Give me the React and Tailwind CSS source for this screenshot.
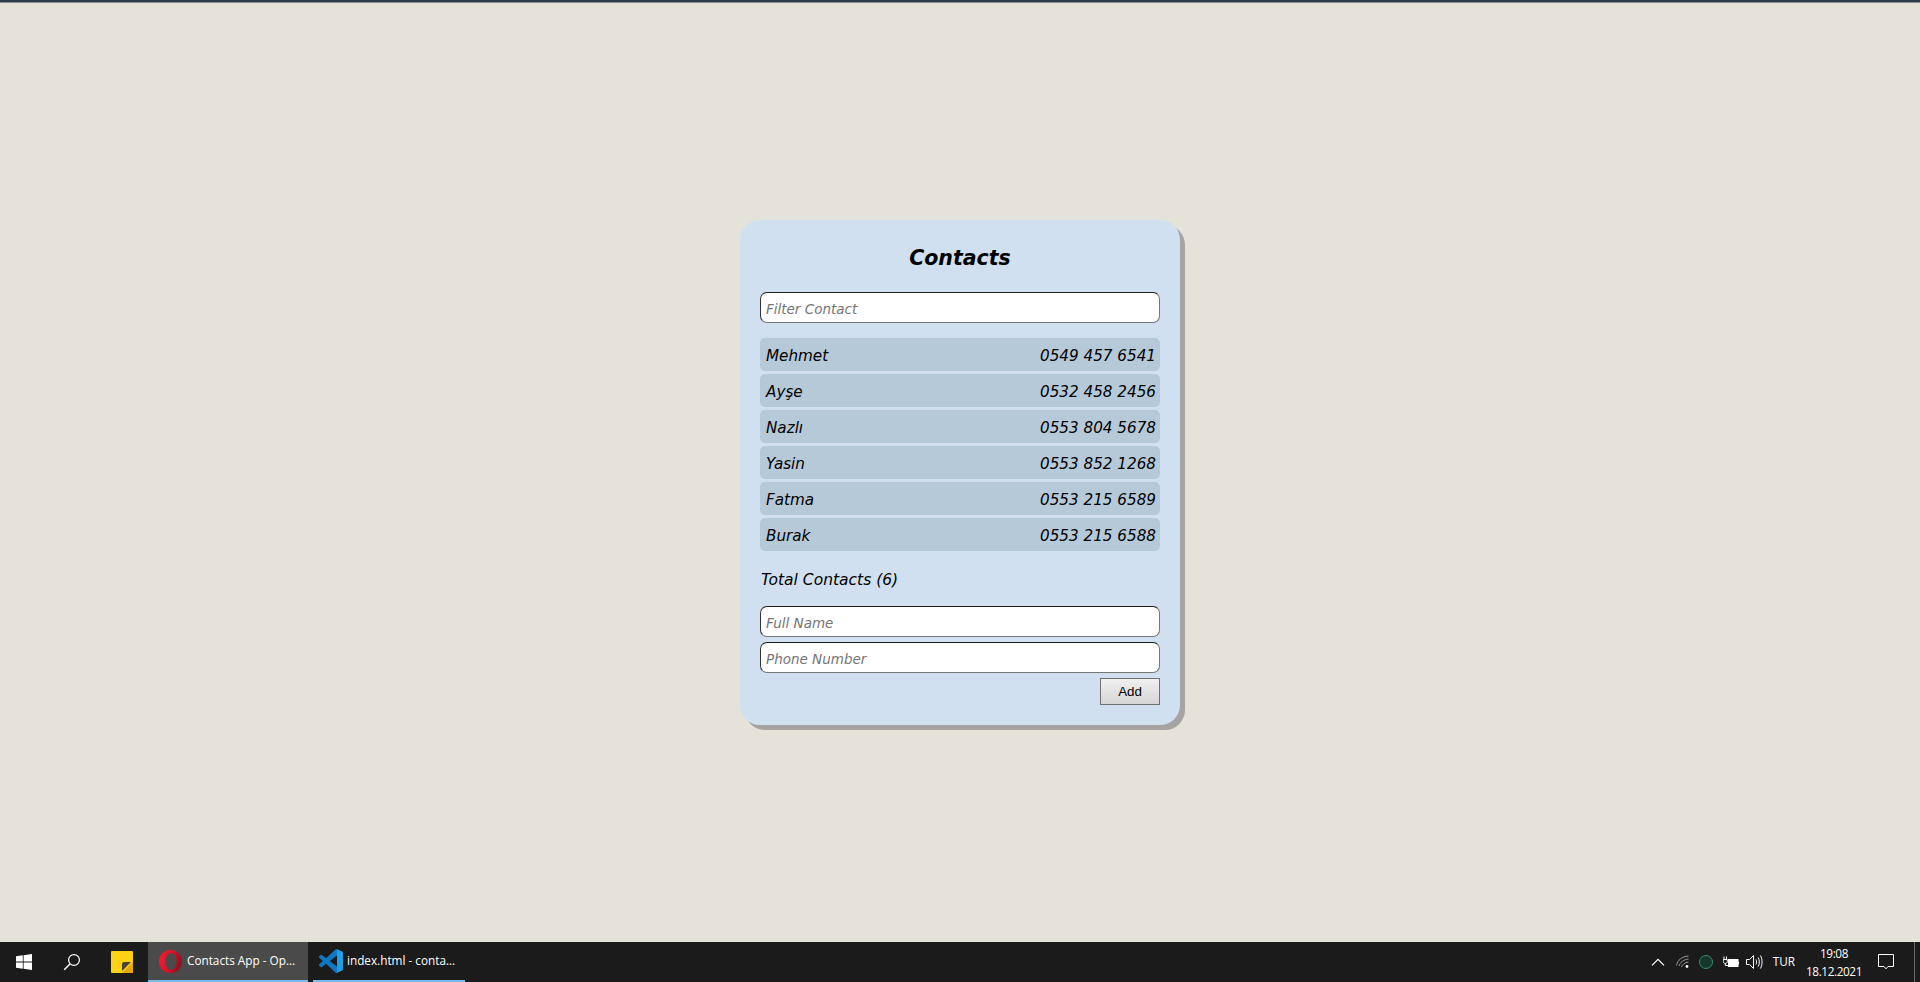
import React from 'react';

const contacts = [
  { name: 'Mehmet', phone: '0549 457 6541' },
  { name: 'Ayşe', phone: '0532 458 2456' },
  { name: 'Nazlı', phone: '0553 804 5678' },
  { name: 'Yasin', phone: '0553 852 1268' },
  { name: 'Fatma', phone: '0553 215 6589' },
  { name: 'Burak', phone: '0553 215 6588' },
];

const FieldInput = ({ placeholder }) => (
  <input
    placeholder={placeholder}
    className="w-full h-[31px] pt-[2px] px-[5px] bg-white rounded-[7px] border border-[#767676] border-t-[#1c1c1c] border-l-[#333333] text-[13.5px] italic outline-none placeholder:text-[#757575]"
  />
);

const ContactRow = ({ name, phone }) => (
  <li className="h-[33px] flex items-center justify-between pt-[4px] pl-[6px] pr-[4px] bg-[#b6c9d9] rounded-[5px] text-[15.2px] italic text-black">
    <span>{name}</span>
    <span>{phone}</span>
  </li>
);

const WindowsIcon = () => (
  <svg width="16" height="16" viewBox="0 0 16 16" fill="#fff">
    <path d="M0 2.300 6.800 1.300V7.600H0ZM7.600 1.200 16 0V7.600H7.600ZM0 8.400H6.800V14.700L0 13.700ZM7.600 8.400H16V16L7.600 14.800Z" />
  </svg>
);

const SearchIcon = () => (
  <svg width="18" height="18" viewBox="0 0 18 18" fill="none" stroke="#fff" strokeWidth="1.2">
    <circle cx="11" cy="7" r="5.400" />
    <path d="M7 11 1.200 16.800" strokeWidth="1.500" />
  </svg>
);

const StickyIcon = () => (
  <svg width="22" height="22" viewBox="0 0 22 22">
    <path d="M1 0H21a1 1 0 0 1 1 1V21a1 1 0 0 1-1 1H1a1 1 0 0 1-1-1V1a1 1 0 0 1 1-1Z" fill="#fcd116" />
    <path d="M22 11V21a1 1 0 0 1-1 1H11Z" fill="#e3a90b" />
    <path d="M20 11 11 20V13a2 2 0 0 1 2-2Z" fill="#4b4436" />
  </svg>
);

const OperaIcon = () => (
  <svg width="23" height="23" viewBox="0 0 23 23">
    <defs>
      <linearGradient id="operaRed" x1="0" y1="0" x2="1" y2="0.300">
        <stop offset="0" stopColor="#f5212f" />
        <stop offset="0.600" stopColor="#d8102a" />
        <stop offset="1" stopColor="#96101f" />
      </linearGradient>
    </defs>
    <circle cx="11.500" cy="11.500" r="11.500" fill="url(#operaRed)" />
    <ellipse cx="12" cy="11.500" rx="5.600" ry="8.600" fill="#4a4a4a" />
  </svg>
);

const VSCodeIcon = () => (
  <svg width="24" height="24" viewBox="0 0 24 24">
    <defs>
      <linearGradient id="vscodeBlue" x1="0" y1="0" x2="1" y2="0">
        <stop offset="0.730" stopColor="#0e78c4" />
        <stop offset="0.730" stopColor="#1f9fe8" />
      </linearGradient>
    </defs>
    <path
      d="M23.150 2.587L18.210.21a1.494 1.494 0 0 0-1.705.29l-9.460 8.630-4.120-3.128a.999.999 0 0 0-1.276.057L.327 7.261A1 1 0 0 0 .326 8.740L3.899 12 .326 15.260a1 1 0 0 0 .001 1.479L1.650 17.940a.999.999 0 0 0 1.276.057l4.120-3.128 9.460 8.630a1.492 1.492 0 0 0 1.704.29l4.942-2.377A1.500 1.500 0 0 0 24 20.060V3.939a1.500 1.500 0 0 0-.85-1.352zm-5.146 14.861L10.826 12l7.178-5.448v10.896z"
      fill="url(#vscodeBlue)"
    />
  </svg>
);

const WifiIcon = () => (
  <svg width="14" height="14" viewBox="0 0 14 14" fill="none" stroke="#9a9a9a" strokeWidth="1">
    <path d="M.5 10.500C1.500 5 6 1.500 12.500 1" />
    <path d="M3 11C4 7.500 7.500 4.500 12.500 4" />
    <path d="M5.500 12C6.300 9.500 8.700 7.500 12.500 7" />
    <circle cx="11" cy="11.500" r="1.400" fill="#fff" stroke="none" />
  </svg>
);

const BatteryIcon = () => (
  <svg width="16" height="13" viewBox="0 0 16 13" fill="none" stroke="#fff" strokeWidth="1">
    <path d="M1 .5V3M3.500 .5V3M.2 3.500H4.300V5.500C4.300 6.800 3.200 7.500 2.300 7.500S.2 6.800.2 5.500ZM2.300 7.500V9.500H5" />
    <rect x="5.500" y="3.500" width="9.500" height="7" fill="#fff" stroke="#fff" />
    <path d="M15.500 5.500V8.500" />
  </svg>
);

const SpeakerIcon = () => (
  <svg width="17" height="16" viewBox="0 0 17 16" fill="none" stroke="#fff" strokeWidth="1">
    <path d="M.5 5.500H3.500L7.500 1.500V14.500L3.500 10.500H.5Z" />
    <path d="M10 5.500C10.800 7 10.800 9 10 10.500M12.200 3.500C13.700 6 13.700 10 12.200 12.500M14.400 1.500C16.600 5 16.600 11 14.400 14.500" />
  </svg>
);

const NotificationIcon = () => (
  <svg width="16" height="16" viewBox="0 0 16 16" fill="none" stroke="#fff" strokeWidth="1">
    <path d="M.5.500H15.500V12.500H10L8 14.800 6 12.500H.5Z" />
  </svg>
);

const App = () => {
  return (
    <div className="h-screen flex flex-col bg-[#e5e2da] overflow-hidden font-['Comic_Sans_MS','DejaVu_Sans',sans-serif]">
      <div className="h-[3px] bg-[#2c3c49] border-b border-[#8b8f90]" />

      <main className="flex-1 flex items-center justify-center">
        <section className="w-[440px] h-[505px] px-5 bg-[#d1e0f0] rounded-[20px] shadow-[5px_5px_0_#a6a4a2] flex flex-col">
          <h1 className="mt-[23px] h-[30px] leading-[30px] text-center text-[20.5px] font-bold italic text-black">Contacts</h1>

          <div className="mt-[19px]">
            <FieldInput placeholder="Filter Contact" />
          </div>

          <ul className="mt-[15px] flex flex-col gap-[3px]">
            {contacts.map((c) => (
              <ContactRow key={c.name} name={c.name} phone={c.phone} />
            ))}
          </ul>

          <p className="mt-[17px] h-6 pl-[1px] leading-6 text-[15.5px] italic text-black">Total Contacts (6)</p>

          <form className="mt-[14px] flex flex-col gap-[5px]">
            <FieldInput placeholder="Full Name" />
            <FieldInput placeholder="Phone Number" />
            <div className="flex justify-end">
              <button
                type="button"
                className="w-[60px] h-[27px] border border-[#707070] bg-gradient-to-b from-[#f0f0f0] to-[#d6d6d6] text-[13.33px] text-black font-['Liberation_Sans',sans-serif]"
              >
                Add
              </button>
            </div>
          </form>
        </section>
      </main>

      <footer className="h-10 shrink-0 flex items-center bg-[#1b1b1b] text-white font-['Open_Sans',sans-serif] text-[11.75px]">
        <div className="w-12 flex justify-center"><WindowsIcon /></div>
        <div className="w-12 flex justify-center"><SearchIcon /></div>
        <div className="w-[52px] flex justify-center"><StickyIcon /></div>
        <div className="w-[160px] h-full flex items-center gap-[5px] pl-[11px] bg-[#4a4a4a] border-b-2 border-[#76b9ed]">
          <OperaIcon />
          <span>Contacts App - Op...</span>
        </div>
        <div className="ml-[5px] w-[152px] h-full flex items-center gap-[4px] pl-[6px] border-b-2 border-[#76b9ed]">
          <VSCodeIcon />
          <span>index.html - conta...</span>
        </div>

        <div className="ml-auto h-full flex items-center">
          <svg width="14" height="8" viewBox="0 0 14 8" fill="none" stroke="#fff" strokeWidth="1.2">
            <path d="M1 7.300 7 1.300 13 7.300" />
          </svg>
          <div className="ml-[11px]"><WifiIcon /></div>
          <div className="ml-[9px] w-[14px] h-[14px] rounded-full bg-[#14362b] border border-[#2f8f6f]" />
          <div className="ml-[10px]"><BatteryIcon /></div>
          <div className="ml-[7px]"><SpeakerIcon /></div>
          <span className="ml-[10px]">TUR</span>
          <div className="ml-[12px] w-[54px] flex flex-col items-center leading-[18px] tracking-[-0.4px]">
            <span>19:08</span>
            <span>18.12.2021</span>
          </div>
          <div className="ml-[17px]"><NotificationIcon /></div>
          <div className="ml-5 h-full w-[1px] bg-[#6b6b6b]" />
          <div className="w-[5px]" />
        </div>
      </footer>
    </div>
  );
};

export default App;
